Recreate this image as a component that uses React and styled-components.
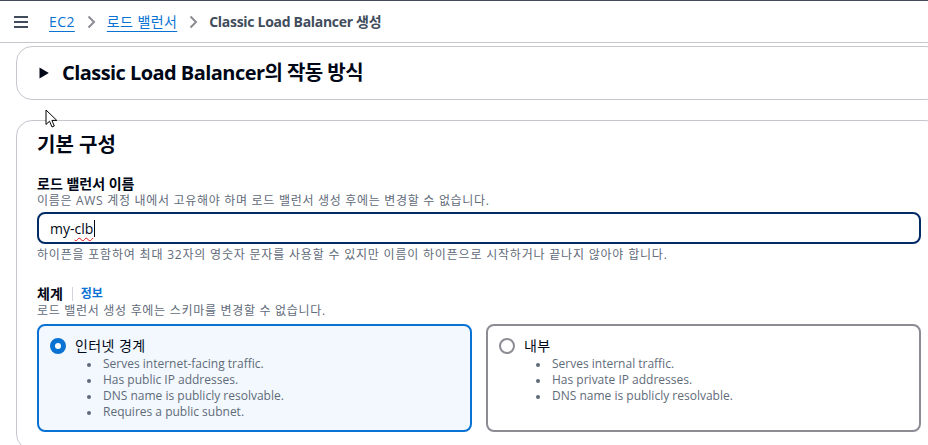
import React from 'react'
import styled, { createGlobalStyle } from 'styled-components'

const GlobalStyle = createGlobalStyle`
  body {
    margin: 0;
    background: #ffffff;
    font-family: "Open Sans", "Noto Sans CJK KR", sans-serif;
    color: #000716;
    overflow: hidden;
  }
`

const schemes = [
  {
    id: 'internet',
    label: '인터넷 경계',
    selected: true,
    items: [
      'Serves internet-facing traffic.',
      'Has public IP addresses.',
      'DNS name is publicly resolvable.',
      'Requires a public subnet.',
    ],
  },
  {
    id: 'internal',
    label: '내부',
    selected: false,
    items: [
      'Serves internal traffic.',
      'Has private IP addresses.',
      'DNS name is publicly resolvable.',
    ],
  },
]

const App = () => {
  return (
    <Page>
      <GlobalStyle />
      <TopBar>
        <MenuButton aria-label="menu">
          <svg width="16" height="16" viewBox="0 0 16 16">
            <path d="M1 3h14M1 8h14M1 13h14" stroke="#414d5c" strokeWidth="2" fill="none" />
          </svg>
        </MenuButton>
        <Crumbs>
          <CrumbLink href="#">EC2</CrumbLink>
          <Chevron />
          <CrumbLink href="#">로드 밸런서</CrumbLink>
          <Chevron />
          <Current>Classic Load Balancer 생성</Current>
        </Crumbs>
      </TopBar>

      <Content>
        <Panel>
          <ExpandHeader>
            <svg width="10" height="12" viewBox="0 0 10 12">
              <path d="M0.5 0.5 L9.8 6 L0.5 11.5 Z" fill="#000716" />
            </svg>
            <PanelTitle>Classic Load Balancer의 작동 방식</PanelTitle>
          </ExpandHeader>
        </Panel>

        <Panel $tall>
          <SectionTitle>기본 구성</SectionTitle>

          <Field>
            <Label>로드 밸런서 이름</Label>
            <Description>이름은 AWS 계정 내에서 고유해야 하며 로드 밸런서 생성 후에는 변경할 수 없습니다.</Description>
            <InputBox>
              my-<Misspelled>clb</Misspelled>
              <Caret />
            </InputBox>
            <Hint>하이픈을 포함하여 최대 32자의 영숫자 문자를 사용할 수 있지만 이름이 하이픈으로 시작하거나 끝나지 않아야 합니다.</Hint>
          </Field>

          <Field $scheme>
            <LabelRow>
              <Label>체계</Label>
              <Divider />
              <InfoLink href="#">정보</InfoLink>
            </LabelRow>
            <Description>로드 밸런서 생성 후에는 스키마를 변경할 수 없습니다.</Description>
            <Cards>
              {schemes.map((s) => (
                <Card key={s.id} $selected={s.selected}>
                  <CardHead>
                    <Radio $checked={s.selected} />
                    <CardLabel>{s.label}</CardLabel>
                  </CardHead>
                  <Bullets>
                    {s.items.map((item) => (
                      <li key={item}>{item}</li>
                    ))}
                  </Bullets>
                </Card>
              ))}
            </Cards>
          </Field>
        </Panel>
      </Content>

      <Cursor width="13" height="19" viewBox="0 0 13 19">
        <path d="M1 1 L1 15.5 L4.5 12.2 L7 18 L9.3 17 L6.9 11.4 L11.8 11.4 Z" fill="#ffffff" stroke="#000000" strokeWidth="1" strokeLinejoin="round" />
      </Cursor>
    </Page>
  )
}

const Chevron = () => (
  <ChevronIcon width="16" height="16" viewBox="0 0 16 16">
    <path d="M5.5 2.5 L11 8 L5.5 13.5" stroke="#8c8c94" strokeWidth="2" fill="none" />
  </ChevronIcon>
)

export default App

const Page = styled.div`
  position: relative;
  width: 928px;
  height: 445px;
  overflow: hidden;
`

const TopBar = styled.header`
  display: flex;
  align-items: center;
  height: 41px;
  border-top: 1px solid #414d5c;
  border-bottom: 1px solid #c6c6cd;
  padding-left: 13px;
  box-sizing: content-box;
`

const MenuButton = styled.button`
  display: flex;
  align-items: center;
  background: none;
  border: none;
  padding: 0;
  margin-right: 20px;
  cursor: pointer;
`

const Crumbs = styled.nav`
  display: flex;
  align-items: center;
  gap: 8px;
  font-size: 14px;
  line-height: 20px;
`

const CrumbLink = styled.a`
  color: #0972d3;
  text-decoration: underline;
  text-underline-offset: 4px;
  text-decoration-thickness: 1px;
  letter-spacing: 0.4px;
`

const ChevronIcon = styled.svg`
  display: block;
`

const Current = styled.span`
  color: #414d5c;
  font-weight: 700;
  letter-spacing: -0.3px;
`

const Content = styled.main`
  display: flex;
  flex-direction: column;
  gap: 20px;
  padding: 3px 0 0 16px;
`

const Panel = styled.section`
  width: 926px;
  box-sizing: border-box;
  border: 1px solid #c6c6cd;
  border-radius: 16px;
  padding: ${(p) => (p.$tall ? '12px 20px 14px' : '0 20px 0 22px')};
  height: ${(p) => (p.$tall ? '330px' : '54px')};
  background: #ffffff;
`

const ExpandHeader = styled.div`
  display: flex;
  align-items: center;
  gap: 13px;
  height: 52px;
`

const PanelTitle = styled.h2`
  margin: 0;
  font-size: 20px;
  font-weight: 700;
  line-height: 24px;
  color: #000716;
  letter-spacing: -0.55px;
`

const SectionTitle = styled.h2`
  margin: 0;
  font-size: 20px;
  line-height: 24px;
  font-weight: 700;
  color: #000716;
`

const Field = styled.div`
  display: flex;
  flex-direction: column;
  margin-top: ${(p) => (p.$scheme ? '22px' : '18px')};
`

const LabelRow = styled.div`
  display: flex;
  align-items: center;
`

const Label = styled.span`
  font-size: 14px;
  line-height: 18px;
  font-weight: 700;
  color: #000716;
`

const Divider = styled.span`
  width: 1px;
  height: 14px;
  background: #d1d5db;
  margin: 0 8px 0 9px;
`

const InfoLink = styled.a`
  font-size: 12px;
  font-weight: 700;
  line-height: 16px;
  color: #0972d3;
  text-decoration: none;
`

const Description = styled.span`
  font-size: 12px;
  line-height: 16px;
  color: #5f6b7a;
  letter-spacing: 0.7px;
`

const InputBox = styled.div`
  display: flex;
  align-items: center;
  height: 32px;
  box-sizing: border-box;
  margin-top: 3px;
  padding: 0 11px;
  border: 2px solid #002b66;
  border-radius: 8px;
  font-size: 14px;
  color: #000716;
`

const Misspelled = styled.span`
  text-decoration: underline wavy #e0141e;
  text-decoration-thickness: 1px;
  text-underline-offset: 3px;
`

const Caret = styled.span`
  display: inline-block;
  width: 1px;
  height: 17px;
  background: #000716;
  margin-left: 1px;
`

const Hint = styled.span`
  margin-top: 3px;
  font-size: 12px;
  line-height: 16px;
  color: #5f6b7a;
  letter-spacing: 0.8px;
`

const Cards = styled.div`
  display: grid;
  grid-template-columns: 1fr 1fr;
  gap: 14px;
  margin-top: 5px;
`

const Card = styled.div`
  height: 108px;
  box-sizing: border-box;
  padding: 12px 11px 0;
  border: 2px solid ${(p) => (p.$selected ? '#0972d3' : '#8c8c94')};
  border-radius: 8px;
  background: ${(p) => (p.$selected ? '#f2f8fd' : '#ffffff')};
`

const CardHead = styled.div`
  display: flex;
  align-items: center;
  gap: 9px;
  height: 16px;
`

const Radio = styled.span`
  width: 16px;
  height: 16px;
  box-sizing: border-box;
  border-radius: 50%;
  border: ${(p) => (p.$checked ? '5px solid #0972d3' : '2px solid #8c8c94')};
  background: #ffffff;
  flex: none;
`

const CardLabel = styled.span`
  font-size: 14px;
  line-height: 18px;
  color: #000716;
  letter-spacing: 0.4px;
`

const Bullets = styled.ul`
  margin: 2px 0 0;
  padding: 0 0 0 53px;
  list-style: none;
  font-size: 12px;
  line-height: 16px;
  color: #5f6b7a;

  li {
    position: relative;
  }

  li::before {
    content: '';
    position: absolute;
    left: -16px;
    top: 7px;
    width: 4px;
    height: 4px;
    border-radius: 50%;
    background: #5f6b7a;
  }
`

const Cursor = styled.svg`
  position: absolute;
  left: 45px;
  top: 109px;
  pointer-events: none;
`
